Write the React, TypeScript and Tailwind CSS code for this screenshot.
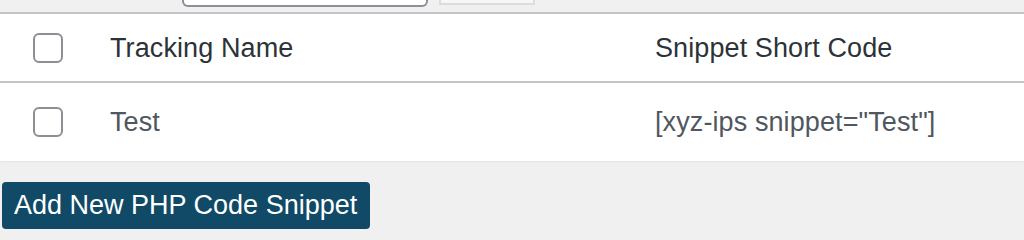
import React from 'react'

const rows = [{ name: 'Test', code: '[xyz-ips snippet="Test"]' }]

function CheckBox() {
  return <div className="w-[30px] h-[30px] rounded-[6px] border-2 border-[#8c8f94] bg-white" />
}

export default function App() {
  return (
    <div className="w-[1024px] h-[240px] overflow-hidden bg-[#f0f0f1] font-['Liberation_Sans',Arial,sans-serif]">
      {/* search box + button, cut off at the top */}
      <div className="h-[12px] flex items-start">
        <div className="ml-[182px] w-[246px] h-[7px] bg-white border-x-2 border-b-2 border-[#8c8f94] rounded-b-[6px]" />
        <div className="ml-[11px] w-[96px] h-[5px] bg-[#f6f7f7] border-x-2 border-b-2 border-[#dcdcde]" />
      </div>

      {/* table */}
      <div className="bg-white border-t-2 border-[#c3c4c7] shadow-[0_1px_2px_rgba(0,0,0,0.06)]">
        <div className="h-[69px] flex items-center border-b-2 border-[#c3c4c7] text-[27px] tracking-[0.1px] text-[#2c3338]">
          <div className="w-[110px] pl-[33px]">
            <CheckBox />
          </div>
          <div className="w-[545px] pt-[2px]">Tracking Name</div>
          <div className="pt-[2px]">Snippet Short Code</div>
        </div>
        {rows.map((r) => (
          <div key={r.name} className="h-[78px] flex items-center text-[27px] tracking-[0.1px] text-[#50575e]">
            <div className="w-[110px] pl-[33px]">
              <CheckBox />
            </div>
            <div className="w-[545px]">{r.name}</div>
            <div>{r.code}</div>
          </div>
        ))}
      </div>

      <div className="mt-[21px] ml-[2px]">
        <button className="h-[47px] w-[368px] pl-[12px] text-left rounded-[4px] bg-[#104a66] text-white text-[27px]">
          Add New PHP Code Snippet
        </button>
      </div>
    </div>
  )
}
